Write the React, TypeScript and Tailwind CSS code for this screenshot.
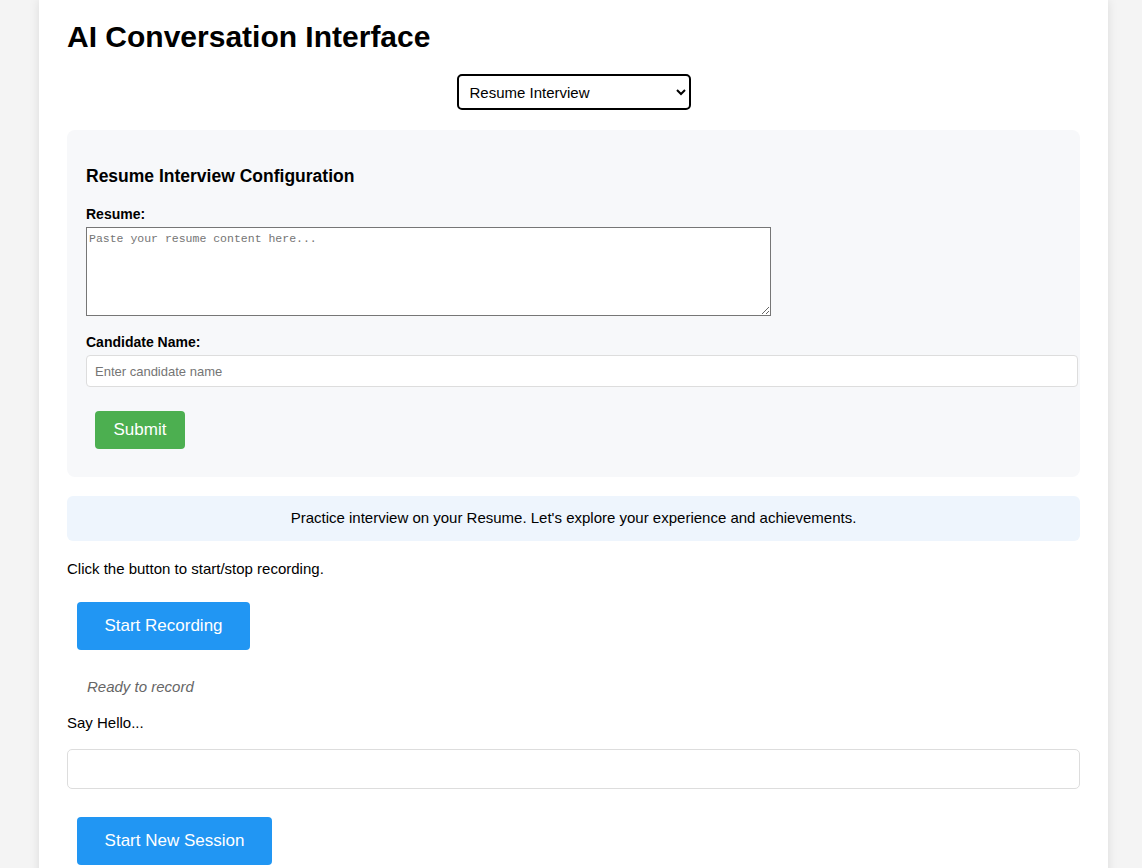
import React, { useState } from "react";

const App = () => {
    const [mode, setMode] = useState("resume");

    return (
        <div className="min-h-screen bg-[#f4f4f4] font-['Liberation_Sans',Arial,sans-serif] text-black">
            <div className="ml-[39px] w-[1069px] min-h-screen bg-white px-[28px] pt-[19px] pb-[20px] shadow-[0_0_10px_rgba(0,0,0,0.1)]">
                <h1 className="text-[30px] font-bold leading-[35px]">AI Conversation Interface</h1>

                <div className="flex justify-center mt-[20px]">
                    <select
                        value={mode}
                        onChange={(e) => setMode(e.target.value)}
                        className="w-[234px] h-[36px] border-2 border-black rounded-[5px] pl-[7px] pr-[4px] text-[15px] bg-white"
                    >
                        <option value="resume">Resume Interview</option>
                        <option value="general">General Conversation</option>
                    </select>
                </div>

                <div className="mt-[20px] bg-[#f7f8fa] rounded-[8px] px-[19px] pt-[36px] pb-[28px]">
                    <h3 className="text-[17.5px] font-bold leading-[21px]">Resume Interview Configuration</h3>

                    <label className="block mt-[19px] text-[14px] font-bold leading-[16px]">Resume:</label>
                    <textarea
                        placeholder="Paste your resume content here..."
                        className="block mt-[5px] w-[685px] h-[89px] border border-[#767676] bg-white px-[2px] py-[2px] font-['Liberation_Mono',monospace] text-[11.5px] placeholder:text-[#757575] resize"
                    />

                    <label className="block mt-[18px] text-[14px] font-bold leading-[16px]">Candidate Name:</label>
                    <input
                        type="text"
                        placeholder="Enter candidate name"
                        className="block mt-[5px] w-[992px] h-[32px] border border-[#ddd] rounded-[4px] bg-white px-[8px] text-[13px] placeholder:text-[#757575]"
                    />

                    <button className="mt-[24px] ml-[9px] w-[90px] h-[38px] bg-[#4caf50] text-white text-[17px] rounded-[4px]">
                        Submit
                    </button>
                </div>

                <div className="mt-[19px] h-[45px] flex items-center justify-center bg-[#eef5fd] rounded-[6px] text-[15px]">
                    Practice interview on your Resume. Let's explore your experience and achievements.
                </div>

                <p className="mt-[19px] text-[15px] leading-[17px]">Click the button to start/stop recording.</p>

                <button className="mt-[25px] ml-[10px] w-[173px] h-[48px] bg-[#2196f3] text-white text-[17px] rounded-[4px]">
                    Start Recording
                </button>

                <p className="mt-[28px] ml-[20px] text-[15px] italic text-[#666] leading-[17px]">Ready to record</p>

                <p className="mt-[19px] text-[15px] leading-[17px]">Say Hello...</p>

                <div className="mt-[18px] h-[40px] border border-[#ddd] rounded-[5px] bg-white" />

                <button className="mt-[28px] ml-[10px] w-[195px] h-[48px] bg-[#2196f3] text-white text-[17px] rounded-[4px]">
                    Start New Session
                </button>
            </div>
        </div>
    );
};

export default App;
